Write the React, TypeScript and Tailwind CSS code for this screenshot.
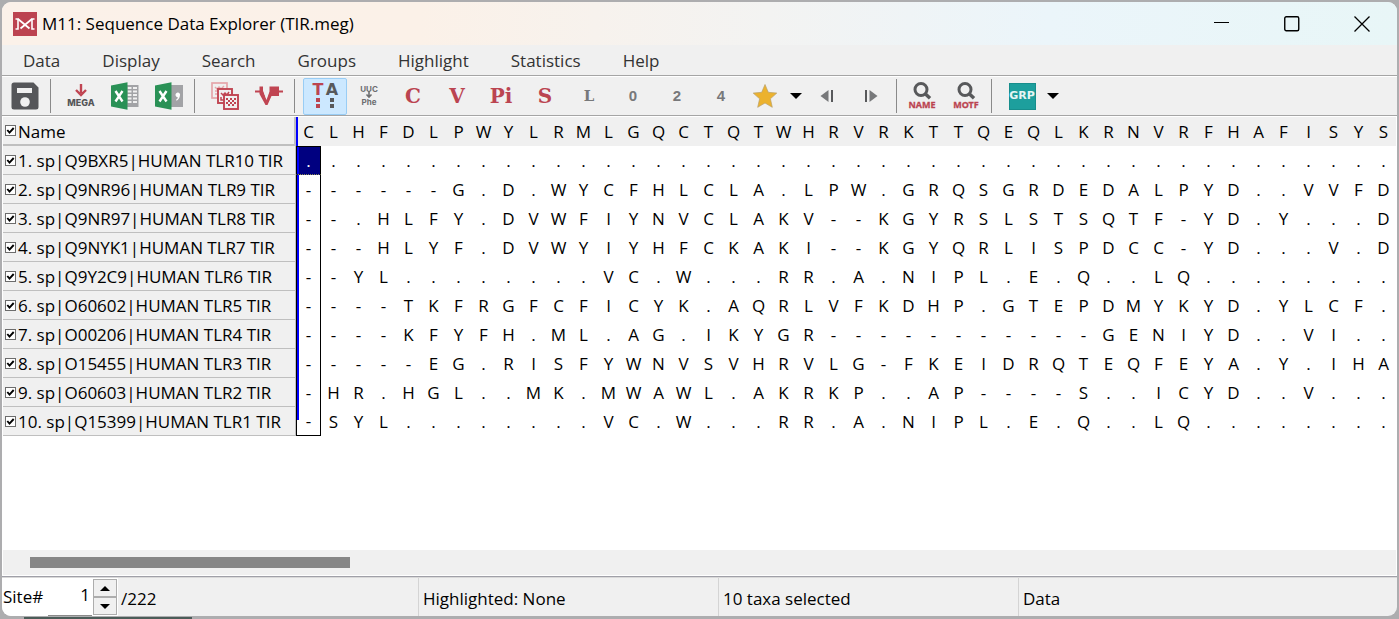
import React from "react";

const menus = ["Data", "Display", "Search", "Groups", "Highlight", "Statistics", "Help"];

const reference = "CLHFDLPWYLRMLGQCTQTWHRVRKTTQEQLKRNVRFHAFISYS";

const taxa = [
  { name: "1. sp|Q9BXR5|HUMAN TLR10 TIR", seq: "............................................" },
  { name: "2. sp|Q9NR96|HUMAN TLR9 TIR", seq: "------G.D.WYCFHLCLA.LPW.GRQSGRDEDALPYD..VVFD" },
  { name: "3. sp|Q9NR97|HUMAN TLR8 TIR", seq: "--.HLFY.DVWFIYNVCLAKV--KGYRSLSTSQTF-YD.Y...D" },
  { name: "4. sp|Q9NYK1|HUMAN TLR7 TIR", seq: "---HLYF.DVWYIYHFCKAKI--KGYQRLISPDCC-YD...V.D" },
  { name: "5. sp|Q9Y2C9|HUMAN TLR6 TIR", seq: "--YL........VC.W...RR.A.NIPL.E.Q..LQ........" },
  { name: "6. sp|O60602|HUMAN TLR5 TIR", seq: "----TKFRGFCFICYK.AQRLVFKDHP.GTEPDMYKYD.YLCF." },
  { name: "7. sp|O00206|HUMAN TLR4 TIR", seq: "----KFYFH.ML.AG.IKYGR-----------GENIYD..VI.." },
  { name: "8. sp|O15455|HUMAN TLR3 TIR", seq: "-----EG.RISFYWNVSVHRVLG-FKEIDRQTEQFEYA.Y.IHA" },
  { name: "9. sp|O60603|HUMAN TLR2 TIR", seq: "-HR.HGL..MK.MWAWL.AKRKP..AP----S..ICYD..V..." },
  { name: "10. sp|Q15399|HUMAN TLR1 TIR", seq: "-SYL........VC.W...RR.A.NIPL.E.Q..LQ........" },
];

function ToolButton({ label, active = false, children }: { label: string; active?: boolean; children: React.ReactNode }) {
  return (
    <button
      type="button"
      aria-label={label}
      className={
        active
          ? "flex h-[37px] w-11 shrink-0 items-center justify-center rounded-[2px] border border-[#99cdf5] bg-[#cce8ff]"
          : "flex h-[37px] w-11 shrink-0 items-center justify-center rounded-[2px] border border-transparent hover:bg-[#e0eefa]"
      }
    >
      {children}
    </button>
  );
}

function Separator({ tight = false }: { tight?: boolean }) {
  return <span className={tight ? "mx-[3px] h-[34px] w-px shrink-0 bg-[#8a8a8a]" : "mr-2 ml-[3px] h-[34px] w-px shrink-0 bg-[#8a8a8a]"} />;
}

function Caret({ label }: { label: string }) {
  return (
    <button type="button" aria-label={label} className="flex h-[37px] w-[18px] shrink-0 items-center justify-center">
      <svg width="12" height="6" viewBox="0 0 12 6">
        <path d="M0 0h12L6 6z" fill="#000" />
      </svg>
    </button>
  );
}

function ExcelIcon({ variant }: { variant: "sheet" | "csv" }) {
  return (
    <svg width="28" height="28" viewBox="0 0 28 28">
      {variant === "sheet" ? (
        <g>
          <rect x="15" y="3" width="12.500" height="22" fill="#a2a3a6" />
          <path d="M16.500 6h4M22 6h4M16.500 9.500h4M22 9.500h4M16.500 13h4M22 13h4M16.500 16.500h4M22 16.500h4M16.500 20h4M22 20h4" stroke="#f0f0f0" strokeWidth="1.900" />
        </g>
      ) : (
        <g>
          <rect x="15" y="3" width="13" height="22" fill="#a2a3a6" />
          <path d="M20.500 13a2.300 2.300 0 1 1 4.400.8c-.3 2.200-1.300 3.800-3.300 4.900l-.6-.9c1.100-.8 1.700-1.600 1.800-2.600-1.300-.1-2.200-1-2.300-2.200z" fill="#fff" />
        </g>
      )}
      <path d="M0 3.500 16.500.3v27.400L0 24.500z" fill="#2a9156" />
      <path d="m4.500 9 7 10.500M11.500 9l-7 10.500" stroke="#fff" strokeWidth="2.400" />
    </svg>
  );
}

function DomainStackIcon() {
  return (
    <svg width="28" height="28" viewBox="0 0 28 28" fill="none">
      <g stroke="#e5a5aa" strokeWidth="1.700">
        <rect x="1" y="1" width="15" height="15" />
        <path d="M4 5l2 2 2-2 2 2 3-3M4 9h3M4 12h2" strokeWidth="1.400" />
      </g>
      <g stroke="#c04552" strokeWidth="1.900">
        <rect x="7" y="7" width="14" height="14" fill="#f0f0f0" />
        <path d="M10 11l2 2 2-2 2 2 2-3M10 15v3h3" strokeWidth="1.500" />
        <rect x="13" y="13" width="14" height="14" fill="#f0f0f0" />
      </g>
      <path
        d="M15 16h2v2h-2zM19 16h2v2h-2zM23 16h2v2h-2zM17 18h2v2h-2zM21 18h2v2h-2zM15 20h2v2h-2zM19 20h2v2h-2zM23 20h2v2h-2zM17 22h2v2h-2zM21 22h2v2h-2z"
        fill="#c04552"
      />
    </svg>
  );
}

function SearchTextIcon({ text }: { text: string }) {
  return (
    <svg width="30" height="30" viewBox="0 0 30 30">
      <circle cx="14" cy="8.500" r="6" fill="none" stroke="#58595b" strokeWidth="3" />
      <path d="m18 12.500 5 4.800" stroke="#58595b" strokeWidth="3.400" />
      <text x="15" y="27" textAnchor="middle" fontFamily="Noto Sans, sans-serif" fontWeight="700" fontSize="9" fill="#bb4450" stroke="#bb4450" strokeWidth=".3">
        {text}
      </text>
    </svg>
  );
}

function Tick({ id, label }: { id: string; label: string }) {
  return (
    <label htmlFor={id} className="flex h-full items-center whitespace-nowrap">
      <span className="relative mr-[2px] flex h-[11px] w-[11px] shrink-0">
        <input
          id={id}
          type="checkbox"
          defaultChecked
          className="peer h-[11px] w-[11px] appearance-none border border-[#6c6c6c] bg-white"
        />
        <svg className="pointer-events-none absolute inset-0 hidden peer-checked:block" width="11" height="11" viewBox="0 0 11 11">
          <path d="M2.300 5 4.500 7.600 8.700 3" fill="none" stroke="#000" strokeWidth="1.900" />
        </svg>
      </span>
      <span className="pt-[2px]">{label}</span>
    </label>
  );
}

export default function App() {
  return (
    <div className="flex min-h-screen flex-col bg-[#adadaf] bg-[linear-gradient(#4b5c58,#4b5c58)] bg-[length:168px_2px] bg-[position:24px_100%] bg-no-repeat pt-[2px] pr-[2px] pb-[3px] pl-[2px] font-['Open_Sans','Noto_Sans',sans-serif] text-[17px] leading-6 text-black">
      <main className="flex flex-1 flex-col overflow-hidden rounded-[9px] bg-[#f0f0f0]">
        <header className="flex h-[43px] shrink-0 items-center bg-[linear-gradient(90deg,#fbf1e9_0%,#fbf1e8_30%,#f3f3f2_55%,#ebf5fa_75%,#e8f6f7_100%)]">
          <svg className="mr-[5px] ml-[11px] shrink-0" width="24" height="24" viewBox="0 0 24 24">
            <rect width="24" height="24" fill="#bc4350" />
            <path d="M2.500 7H5v10H2.500M21.500 7H19v10h2.500" fill="none" stroke="#fff" strokeWidth="1.600" />
            <path d="m5 7 11.500 9.500M19 7 7.500 16.500" fill="none" stroke="#fff" strokeWidth="1.800" />
          </svg>
          <h1 className="flex-1 truncate">M11: Sequence Data Explorer (TIR.meg)</h1>
          <button type="button" aria-label="Minimize" className="flex h-full w-[70px] items-center justify-center">
            <svg width="16" height="16" viewBox="0 0 16 16"><path d="M0 6.500h15" stroke="#000" /></svg>
          </button>
          <button type="button" aria-label="Maximize" className="flex h-full w-[70px] items-center justify-center">
            <svg width="16" height="16" viewBox="0 0 16 16"><rect x=".75" y=".75" width="14" height="14" rx="1.500" fill="none" stroke="#000" strokeWidth="1.400" /></svg>
          </button>
          <button type="button" aria-label="Close" className="flex h-full w-[70px] items-center justify-center">
            <svg width="16" height="16" viewBox="0 0 16 16"><path d="m.5.500 15 15m0-15-15 15" stroke="#000" strokeWidth="1.300" /></svg>
          </button>
        </header>

        <nav className="flex h-[31px] shrink-0 items-center border-b border-[#a5a5a5] text-[#333]">
          {menus.map((menu) => (
            <button key={menu} type="button" className="h-full px-[21px] pt-px hover:bg-[#dcebf8]">
              {menu}
            </button>
          ))}
        </nav>

        <div role="toolbar" aria-label="Tools" className="flex h-10 shrink-0 items-center overflow-hidden border-t border-b border-t-white border-b-[#a5a5a5] pl-px">
          <ToolButton label="Save">
            <svg width="28" height="28" viewBox="0 0 28 28">
              <path d="M3 .5h19.500l5 5V25a2.500 2.500 0 0 1-2.500 2.500H3A2.500 2.500 0 0 1 .5 25V3A2.500 2.500 0 0 1 3 .5z" fill="#555659" />
              <path d="M6 6h15v5H6z" fill="#f0f0f0" />
              <circle cx="14" cy="20" r="4.800" fill="#f0f0f0" />
            </svg>
          </ToolButton>
          <Separator />
          <ToolButton label="Export to MEGA">
            <svg width="30" height="28" viewBox="0 0 30 28">
              <path d="M15 2v9M10 8l5 5 5-5" fill="none" stroke="#c04552" strokeWidth="2.400" />
              <text x="15" y="24" textAnchor="middle" fontFamily="Inter, sans-serif" fontWeight="800" fontSize="9" fill="#555659">MEGA</text>
            </svg>
          </ToolButton>
          <ToolButton label="Export to Excel"><ExcelIcon variant="sheet" /></ToolButton>
          <ToolButton label="Export to CSV"><ExcelIcon variant="csv" /></ToolButton>
          <Separator />
          <ToolButton label="Domains"><DomainStackIcon /></ToolButton>
          <ToolButton label="Select genes and domains">
            <svg width="28" height="28" viewBox="0 0 28 28">
              <path d="M0 9.500h6M22 9.500h6" stroke="#c04552" strokeWidth="2.200" />
              <path d="M4.500 4.500H8v4l3.500 9.500 3-8.500v-5H24v9.500h-7.500L12.500 23h-2L4.500 12z" fill="#c04552" />
              <path d="M8.500 5.500h5.500v4l-2.700 7.500-2.800-8z" fill="#f0f0f0" />
            </svg>
          </ToolButton>
          <Separator />
          <ToolButton label="Use identical symbol" active>
            <svg width="30" height="30" viewBox="0 0 30 30">
              <text x="8" y="14" textAnchor="middle" fontFamily="DejaVu Sans, sans-serif" fontWeight="700" fontSize="16" fill="#bb4450">T</text>
              <text x="22" y="14" textAnchor="middle" fontFamily="DejaVu Sans, sans-serif" fontWeight="700" fontSize="16" fill="#58595b">A</text>
              <path d="M6 17h4v4H6zM6 23h4v4H6z" fill="#bb4450" />
              <path d="M20 17h4v4h-4zM20 23h4v4h-4z" fill="#58595b" />
            </svg>
          </ToolButton>
          <ToolButton label="Translate sequences">
            <svg width="30" height="28" viewBox="0 0 30 28">
              <text x="15" y="10" textAnchor="middle" fontFamily="Inter, sans-serif" fontWeight="700" fontSize="8" fill="#6d6e70">UUC</text>
              <path d="M15 9v6M12.500 12.500l2.500 2.500 2.500-2.500" fill="none" stroke="#6d6e70" strokeWidth="1.600" />
              <text x="15" y="23" textAnchor="middle" fontFamily="Inter, sans-serif" fontWeight="700" fontSize="8" fill="#6d6e70">Phe</text>
            </svg>
          </ToolButton>
          {["C", "V", "Pi", "S"].map((t) => (
            <ToolButton key={t} label={`Highlight ${t}`}>
              <span className="font-['DejaVu_Serif',serif] text-[20px] leading-6 font-bold text-[#bb4450]">{t}</span>
            </ToolButton>
          ))}
          <ToolButton label="Highlight L">
            <span className="font-['DejaVu_Serif',serif] text-[15px] leading-6 font-bold text-[#77787a]">L</span>
          </ToolButton>
          {["0", "2", "4"].map((t) => (
            <ToolButton key={t} label={`Highlight ${t}-fold`}>
              <span className="font-['Liberation_Sans',sans-serif] text-[15px] leading-6 font-bold text-[#77787a]">{t}</span>
            </ToolButton>
          ))}
          <ToolButton label="Special highlight">
            <svg width="26" height="26" viewBox="0 0 26 26">
              <path d="m13 1.500 3.300 7.800 8.500.8-6.400 5.700 1.900 8.500L13 20l-7.300 4.300 1.900-8.500L1.200 10.100l8.500-.8z" fill="#ecb22e" stroke="#b9a06a" strokeWidth=".7" />
            </svg>
          </ToolButton>
          <Caret label="Special highlight options" />
          <ToolButton label="Previous highlighted site">
            <svg width="14" height="14" viewBox="0 0 14 14"><path d="M8.500 1v12L.5 7z" fill="#77787a" /><path d="M12 1v12" stroke="#58595b" strokeWidth="2" /></svg>
          </ToolButton>
          <ToolButton label="Next highlighted site">
            <svg width="14" height="14" viewBox="0 0 14 14"><path d="M5.500 1v12l8-6z" fill="#77787a" /><path d="M2 1v12" stroke="#58595b" strokeWidth="2" /></svg>
          </ToolButton>
          <Separator tight />
          <ToolButton label="Find name"><SearchTextIcon text="NAME" /></ToolButton>
          <ToolButton label="Find motif"><SearchTextIcon text="MOTF" /></ToolButton>
          <Separator />
          <ToolButton label="Groups">
            <span className="flex h-[27px] w-[27px] shrink-0 items-center justify-center border border-[#178e8c] bg-[#1d9f9d] font-['DejaVu_Sans',sans-serif] text-[11px] font-bold text-[#e8f5f4]">GRP</span>
          </ToolButton>
          <Caret label="Group options" />
        </div>

        <section className="flex flex-1 flex-col border-b border-[#a0a0a8] bg-white p-px">
          <div className="flex-1 overflow-hidden">
            <table className="w-max table-fixed border-separate border-spacing-0">
              <thead>
                <tr className="h-[29px] bg-[#f0f0f0]">
                  <th scope="col" className="h-[29px] w-[293px] border-r-2 border-b-2 border-[#bfbfbf] p-0 pl-[2px] text-left font-normal">
                    <Tick id="taxon-all" label="Name" />
                  </th>
                  {reference.split("").map((base, i) => (
                    <th
                      key={i}
                      scope="col"
                      className={i === 0 ? "w-[25px] min-w-[25px] p-0 text-center font-normal shadow-[inset_2px_0_0_#0000ff]" : "w-[25px] min-w-[25px] p-0 text-center font-normal"}
                    >
                      {base}
                    </th>
                  ))}
                </tr>
              </thead>
              <tbody>
                {taxa.map((taxon, row) => (
                  <tr key={taxon.name} className="h-[29px]">
                    <th scope="row" className="h-[29px] border-r border-b border-[#bfbfbf] bg-[#f0f0f0] p-0 pl-[2px] text-left font-normal">
                      <Tick id={`taxon-${row}`} label={taxon.name} />
                    </th>
                    {taxon.seq.split("").map((base, col) => (
                      <td
                        key={col}
                        className={
                          col > 0
                            ? "p-0 text-center"
                            : row === 0
                              ? "border border-b border-black border-b-[#8c8c50] bg-[#000080] p-0 text-center text-white shadow-[inset_2px_0_0_#0000ff] [border-bottom-style:dotted]"
                              : row === taxa.length - 1
                                ? "border-r border-b border-l border-black bg-[linear-gradient(#00f,#00f)] bg-[length:2px_13px] bg-no-repeat p-0 text-center"
                                : "border-r border-l border-black p-0 text-center shadow-[inset_2px_0_0_#0000ff]"
                        }
                      >
                        {base}
                      </td>
                    ))}
                  </tr>
                ))}
              </tbody>
            </table>
          </div>
          <div className="flex h-[25px] shrink-0 items-center bg-[#f0f0f0] pl-[27px]">
            <div className="h-[11px] w-[23.4%] bg-[#868686]" />
          </div>
        </section>

        <footer className="flex h-[39px] shrink-0 items-stretch border-t border-[#d9d9d9]">
          <label htmlFor="site" className="flex w-[46px] shrink-0 items-center bg-white pl-px">Site#</label>
          <input id="site" type="text" defaultValue="1" className="w-[44px] shrink-0 border-b border-[#8a8a8a] bg-white pr-[2px] pb-1 text-right outline-none" />
          <div className="flex w-[26px] shrink-0 flex-col bg-white p-px">
            <button type="button" aria-label="Next site" className="flex flex-1 items-center justify-center border border-[#adadad] bg-[#f0f0f0]">
              <svg width="10" height="5" viewBox="0 0 10 5"><path d="M0 5h10L5 0z" /></svg>
            </button>
            <button type="button" aria-label="Previous site" className="flex flex-1 items-center justify-center border border-[#adadad] bg-[#f0f0f0]">
              <svg width="10" height="5" viewBox="0 0 10 5"><path d="M0 0h10L5 5z" /></svg>
            </button>
          </div>
          <div className="flex w-[300px] shrink-0 items-center pt-[3px] pl-[3px]">/222</div>
          <div className="flex w-[300px] shrink-0 items-center border-l border-[#d4d4d4] pt-[3px] pl-1">Highlighted: None</div>
          <div className="flex w-[300px] shrink-0 items-center border-l border-[#d4d4d4] pt-[3px] pl-1">10 taxa selected</div>
          <div className="flex flex-1 items-center border-l border-[#d4d4d4] pt-[3px] pl-1">Data</div>
        </footer>
      </main>
    </div>
  );
}
